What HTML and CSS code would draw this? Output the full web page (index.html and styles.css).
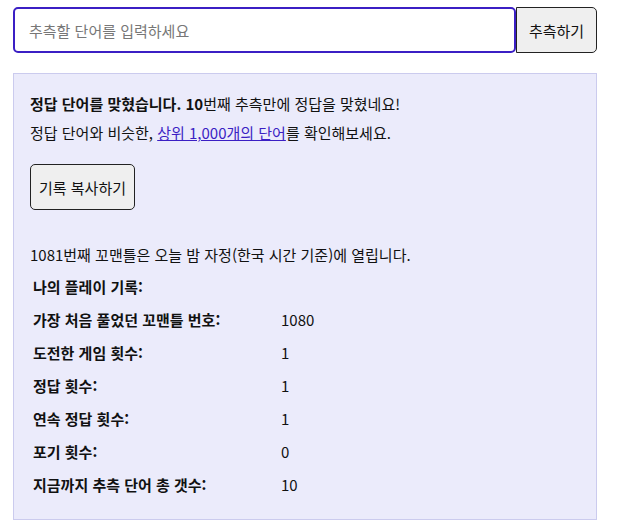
FILE: index.html
```html
<!DOCTYPE html>
<html lang="ko">
<head>
    <meta charset="UTF-8">
    <meta name="viewport" content="width=device-width, initial-scale=1.0">
    <title>꼬맨틀</title>
    <link rel="stylesheet" href="styles.css">
</head>
<body>

<div class="container">
    <form class="guess-form" onsubmit="return false;">
        <input type="text" class="guess-input" placeholder="추측할 단어를 입력하세요" autofocus>
        <button type="submit" class="btn guess-btn">추측하기</button>
    </form>

    <div class="response">
        <p><b>정답 단어를 맞혔습니다. 10</b>번째 추측만에 정답을 맞혔네요!<br>
        정답 단어와 비슷한, <a href="#">상위 1,000개의 단어</a>를 확인해보세요.</p>

        <button type="button" class="btn copy-btn">기록 복사하기</button>

        <p class="next">1081번째 꼬맨틀은 오늘 밤 자정(한국 시간 기준)에 열립니다.</p>

        <table class="stats">
            <tr><th colspan="2">나의 플레이 기록:</th></tr>
            <tr><th>가장 처음 풀었던 꼬맨틀 번호:</th><td>1080</td></tr>
            <tr><th>도전한 게임 횟수:</th><td>1</td></tr>
            <tr><th>정답 횟수:</th><td>1</td></tr>
            <tr><th>연속 정답 횟수:</th><td>1</td></tr>
            <tr><th>포기 횟수:</th><td>0</td></tr>
            <tr><th>지금까지 추측 단어 총 갯수:</th><td>10</td></tr>
        </table>
    </div>
</div>

</body>
</html>
```

FILE: styles.css
```css
body {
    margin: 0;
    font-family: "Noto Sans CJK KR", "Noto Sans", sans-serif;
    font-size: 15px;
    color: #111;
    background-color: #fff;
}
.container {
    width: 584px;
    padding: 7px 0 0 13px;
}
.guess-form {
    display: flex;
    margin: 0;
}
.guess-input {
    flex: 1;
    min-width: 0;
    height: 46px;
    box-sizing: border-box;
    margin: 0;
    padding: 0 14px;
    font-family: inherit;
    font-size: 15px;
    border: 2px solid #3b1fc4;
    border-radius: 5px;
    outline: none;
}
.guess-input::placeholder {
    color: #777;
}
.btn {
    margin: 0;
    font-family: inherit;
    font-size: 15px;
    color: #111;
    background-color: #efefef;
    border: 1px solid #222;
    border-radius: 5px;
    cursor: pointer;
}
.guess-btn {
    width: 81px;
    height: 46px;
    border-top-left-radius: 0;
    border-bottom-left-radius: 0;
}
.response {
    margin-top: 20px;
    padding: 1px 16px 17px;
    background-color: #ebebfb;
    border: 1px solid #cbcbee;
}
.response p {
    margin: 14px 0 0;
    line-height: 29px;
}
.response a {
    color: #3b1fc4;
}
.copy-btn {
    margin-top: 17px;
    height: 46px;
    padding: 0 8px;
}
.response p.next {
    margin-top: 30px;
}
.stats {
    border-spacing: 2px;
    margin-top: 0;
}
.stats th, .stats td {
    height: 29px;
    padding: 1px;
    text-align: left;
    vertical-align: middle;
}
.stats th {
    width: 244px;
    font-weight: bold;
}
```
